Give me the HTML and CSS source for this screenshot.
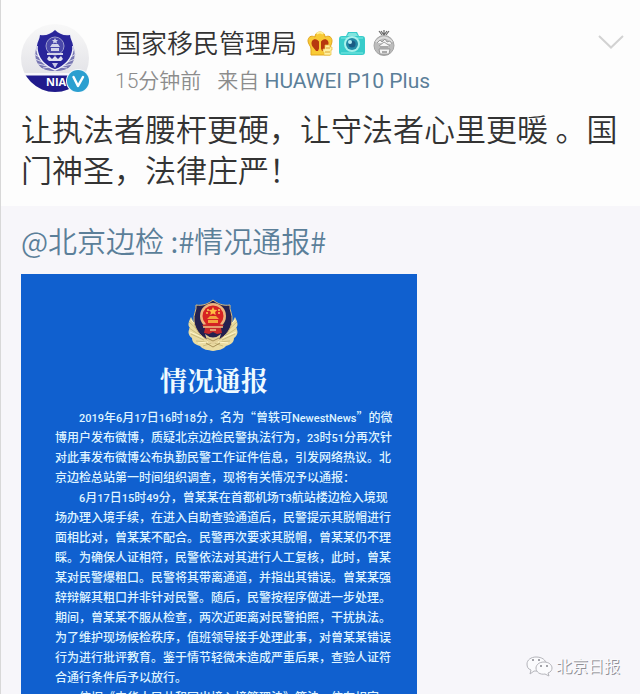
FILE: index.html
```html
<!DOCTYPE html>
<html lang="zh-CN">
<head>
<meta charset="utf-8">
<title>国家移民管理局</title>
<link rel="stylesheet" href="styles.css">
</head>
<body>
<main class="post">
  <header class="head">
    <div class="avatar">
      <svg viewBox="0 0 68 68" role="img" aria-label="NIA">
        <defs>
          <clipPath id="round"><circle cx="34" cy="34" r="34"/></clipPath>
          <linearGradient id="silver" x1="0" y1="0" x2="0" y2="1"><stop offset="0" stop-color="#f8f8f8"/><stop offset="1" stop-color="#dcdce2"/></linearGradient>
        </defs>
        <g clip-path="url(#round)">
          <rect width="68" height="68" fill="url(#silver)"/>
          <path d="M0 51h68v17H0z" fill="#201a8c"/>
          <path d="M0 49h68v2.500H0z" fill="#f7f7fb"/>
        </g>
        <g fill="#7776b2">
          <path d="M17 19c-3 6-4 15 0 21 4 6 10 7 17 7s13-1 17-7c4-6 3-15 0-21l-5 18-12 9-12-9z"/>
        </g>
        <g fill="none" stroke="#d9d9ec" stroke-width="1">
          <path d="M14 25l7 5M13 30l9 5M14 35l10 4M17 40l9 2M22 44l7-1M54 25l-7 5M55 30l-9 5M54 35l-10 4M51 40l-9 2M46 44l-7-1"/>
        </g>
        <path d="M34 6c4 4 9 6 15 5 0 5 4 8 3 14-1 10-8 17-18 21-10-4-17-11-18-21-1-6 3-9 3-14 6 1 11-1 15-5z" fill="#29259a" stroke="#eeeef7" stroke-width="1.500"/>
        <path d="M34 6c4 4 9 6 15 5 0 4 3 7 3 11H16c0-4 3-7 3-11 6 1 11-1 15-5z" fill="#29259a"/>
        <circle cx="34" cy="22" r="9" fill="#4a48aa" stroke="#9d9dce"/>
        <path d="M34 14l1 2h2l-1.500 1.500.5 2-2-1-2 1 .5-2L31 16h2zM29 23l2-3h6l2 3zM30 24h8v3h-8zM26 29h16v2H26z" fill="#d4d4ea"/>
        <path d="M26 35l2-3 3 3 3-3 3 3 3-3 2 3-2 2H28z" fill="#e1e1f0"/>
        <path d="M31 39h6l-3 5z" fill="#c9c9e6"/>
        <text x="25" y="62" class="nia">NIA</text>
        <circle cx="57" cy="57" r="12" fill="#f3fafd"/>
        <circle cx="57" cy="57" r="11" fill="#2b9fd0"/>
        <path d="M52.500 53l4.500 9 5-9" fill="none" stroke="#fff" stroke-width="2.500" stroke-linecap="round" stroke-linejoin="round"/>
      </svg>
    </div>
    <div class="who">
      <div class="name-row">
        <h1 class="name">国家移民管理局</h1>
        <svg class="badge" viewBox="0 0 26 28" aria-hidden="true">
          <path d="M8 7c0-3 2-5 5-5s5 2 5 5c4-2 7 0 7 4 0 3-2 5-2 8v6H4v-6c0-3-3-5-3-8 0-4 3-6 7-4z" fill="#f8ca35" stroke="#e3a51c"/>
          <path d="M10 4c1-2 5-2 6 0" fill="none" stroke="#fff19b" stroke-width="2"/>
          <path d="M5 11c2-3 6-2 8 2 2-4 6-5 8-2 2 4-2 7-4 10h-2l-2-5-2 5H9c-2-3-6-6-4-10z" fill="#b7380e"/>
          <path d="M13 8v14M6 23h14" stroke="#f8ca35" stroke-width="2"/>
          <path d="M18 15h5v2h2v3h-1v5h-7v-3h-1v-3h2z" fill="#fff1a3" stroke="#e9bd3d" stroke-width=".7"/>
          <path d="M19 18h4M18 22h5" stroke="#dca32d"/>
        </svg>
        <svg class="badge" viewBox="0 0 26 28" aria-hidden="true">
          <path d="M7 6l2-4h9l2 4h3q3 0 3 3v13q0 3-3 3H3q-3 0-3-3V9q0-3 3-3z" fill="#38ccca"/>
          <path d="M8 6l2-3h7l2 3z" fill="#82e5df"/>
          <path d="M2 8h22M2 23h22" stroke="#7deae4"/>
          <circle cx="13" cy="14" r="8" fill="#a8f2ec"/>
          <circle cx="13" cy="14" r="6" fill="#238ba8"/>
          <circle cx="13" cy="14" r="3.500" fill="#1a5c84"/>
          <circle cx="11" cy="12" r="2" fill="#b1edf3"/>
        </svg>
        <svg class="badge" viewBox="0 0 26 28" aria-hidden="true">
          <path d="M8 1l3 4M13 0v5M18 1l-3 4M10 1l3 4 3-4" fill="none" stroke="#686868" stroke-width="1.200"/>
          <circle cx="13" cy="15.500" r="10" fill="#bcbcbc" stroke="#a4a4a4"/>
          <path d="M5 12q8-9 16 0" fill="none" stroke="#dedede" stroke-width="2"/>
          <path d="M6 13l3-3 2 2 3-3 2 3 3-1 2 3M8 16l5-4 6 4M9 17h8M8 19h11l-1 5H9z" fill="#f5f5f5" stroke="#8a8a8a" stroke-width=".8"/>
          <path d="M11 21h5v2h-5z" fill="#aaa"/>
        </svg>
      </div>
      <p class="meta"><span>15分钟前</span><span>来自 <a href="#device">HUAWEI P10 Plus</a></span></p>
    </div>
    <button class="more" type="button" aria-label="更多">
      <svg viewBox="0 0 26 16" aria-hidden="true"><path d="M1 2l12 11.500L25 2" fill="none" stroke="#d2d2d2" stroke-width="2"/></svg>
    </button>
  </header>
  <p class="message">让执法者腰杆更硬，让守法者心里更暖 。国门神圣，法律庄严！</p>
  <section class="quote">
    <p class="source"><a href="#user">@北京边检</a> :<a href="#topic">#情况通报#</a></p>
    <article class="notice">
      <svg class="emblem" viewBox="0 0 54 54" role="img" aria-label="警徽">
        <path d="M5 18c-2 4-4 8-1 11-3 4-1 8 2 10 0 5 4 7 8 8 3 4 8 4 13 5 5-1 10-1 13-5 4-1 8-3 8-8 3-2 5-6 2-10 3-3 1-7-1-11L40 36H14z" fill="#eadca2"/>
        <path d="M3 23l11 10M3 29l12 8M5 35l13 6M10 42l11 1M17 47l9-3M51 23L40 33M51 29l-12 8M49 35l-13 6M44 42l-11 1M37 47l-9-3" stroke="#cbbd80" fill="none"/>
        <path d="M5 21l9 9M4 33l14 6M12 44l10-1M49 21l-9 9M50 33l-14 6M42 44l-10-1" stroke="#fff5c9" fill="none"/>
        <path d="M27 1c5 4 10 6 17 5-1 5 3 9 2 16-1 10-8 17-19 22C16 39 9 32 8 22 7 15 11 11 10 6c7 1 12-1 17-5z" fill="#24204f" stroke="#d9bb7b"/>
        <circle cx="27" cy="17" r="13" fill="#eeb47c"/>
        <circle cx="27" cy="17" r="10.500" fill="#d62223"/>
        <path d="M27 8l1.300 2.700 3 .3-2.200 2 .6 3-2.700-1.500-2.700 1.500.6-3-2.200-2 3-.3z" fill="#ffbd42"/>
        <path d="M20 14h2M21 11h2M32 11h2M32 14h2" stroke="#ffcc54" stroke-width="1.500"/>
        <path d="M21 20l3-3h6l3 3zM22 21h10v3H22z" fill="#f3a43c"/>
        <path d="M16 26l5-1 6 2 6-2 5 1-3 3 1 5-5 1-4-2-4 2-5-1 1-5z" fill="#c5292a"/>
        <path d="M17 28h20M24 31h6" stroke="#f0c285" stroke-width="1.500"/>
        <path d="M19 35q8 7 16 0l-2 6-6 5-6-5z" fill="#e4d19a"/>
        <path d="M21 39l6 3 6-3M20 44l7 4 7-4" stroke="#a99259" fill="none"/>
      </svg>
      <h2 class="title">情况通报</h2>
      <div class="report">
        <p><b>2019</b>年<b>6</b>月<b>17</b>日<b>16</b>时<b>18</b>分，名为“曾轶可<b>NewestNews</b>”的微<br>博用户发布微博，质疑北京边检民警执法行为，<b>23</b>时<b>51</b>分再次针<br>对此事发布微博公布执勤民警工作证件信息，引发网络热议。北<br>京边检总站第一时间组织调查，现将有关情况予以通报：</p>
        <p><b>6</b>月<b>17</b>日<b>15</b>时<b>49</b>分，曾某某在首都机场<b>T3</b>航站楼边检入境现<br>场办理入境手续，在进入自助查验通道后，民警提示其脱帽进行<br>面相比对，曾某某不配合。民警再次要求其脱帽，曾某某仍不理<br>睬。为确保人证相符，民警依法对其进行人工复核，此时，曾某<br>某对民警爆粗口。民警将其带离通道，并指出其错误。曾某某强<br>辞辩解其粗口并非针对民警。随后，民警按程序做进一步处理。<br>期间，曾某某不服从检查，两次近距离对民警拍照，干扰执法。<br>为了维护现场候检秩序，值班领导接手处理此事，对曾某某错误<br>行为进行批评教育。鉴于情节轻微未造成严重后果，查验人证符<br>合通行条件后予以放行。</p>
        <p>依据《中华人民共和国出境入境管理法》等法，依有规定，</p>
      </div>
    </article>
  </section>
  <div class="watermark">
    <svg viewBox="0 0 28 22" aria-hidden="true">
      <g fill="#fbfbfd" stroke="#b4b4ba" stroke-width="1">
        <path d="M10 1c-5 0-9 3-9 7 0 3 1 5 4 6l-1 4 4-3h4c5 0 8-3 8-7s-4-7-10-7z"/>
        <path d="M18 6c-5 0-8 3-8 6 0 4 4 7 9 6l4 2-1-3c3-1 4-3 4-5 0-3-3-6-8-6z"/>
      </g>
      <path d="M6 4h2M12 4h2M14 10h2M20 10h2" stroke="#88888e" stroke-width="1.500"/>
    </svg>
    <span>北京日报</span>
  </div>
</main>
</body>
</html>
```
FILE: styles.css
```css
* { box-sizing: border-box; }

body {
  margin: 0;
  background: #fdfdfd;
  color: #333;
  font-family: Roboto, "Noto Sans CJK SC", sans-serif;
}

h1, h2, p { margin: 0; font-weight: 350; }
a { color: #5b7f99; text-decoration: none; }
svg { display: block; }

.post {
  position: relative;
  display: flex;
  flex-direction: column;
  height: 100vh;
  overflow: hidden;
  border-left: 1px solid #d8d8d8;
}

.head {
  display: flex;
  align-items: flex-start;
  padding: 24px 16px 0 20px;
}

.avatar { width: 68px; margin-right: 26px; }
.nia { font: bold 11px "Open Sans", sans-serif; fill: #fff; }
.who { flex: 1; }
.name-row { display: flex; align-items: center; height: 40px; }
.name { margin-right: 10px; font-size: 26px; line-height: 40px; }
.badge { width: 26px; height: 28px; margin-right: 6px; }
.meta {
  display: flex;
  gap: 16px;
  color: #8c8c8c;
  font-size: 21px;
  line-height: 34px;
}
.meta a { font-weight: 400; }

.more {
  margin-top: 10px;
  padding: 0;
  border: 0;
  background: none;
}
.more svg { width: 26px; height: 16px; }

.message {
  padding: 12px 20px 14px;
  font-size: 31px;
  line-height: 41px;
}

.quote {
  flex: 1;
  min-height: 0;
  padding: 12px 20px 0;
  background: #f7f6fa;
}
.source {
  margin-bottom: 12px;
  color: #5b7f99;
  font-family: "Noto Sans CJK SC", sans-serif;
  font-size: 29px;
  line-height: 44px;
}

.notice {
  width: 66%;
  min-width: 396px;
  padding: 25px 0 24px 34px;
  background: #1060cf;
  color: #dff4ff;
  font-family: "Noto Sans CJK SC", sans-serif;
}
.emblem { width: 54px; height: 54px; margin-left: 131px; }
.title {
  margin-left: 105px;
  color: #effaff;
  font-family: "Noto Serif CJK SC", "Noto Sans CJK SC", serif;
  font-size: 27px;
  font-weight: 700;
  line-height: 54px;
}
.report { font-size: 12px; line-height: 20px; white-space: nowrap; }
.report p { font-weight: 500; text-indent: 24px; }
.report b { font: 500 11px Roboto, sans-serif; }

.watermark {
  position: absolute;
  right: 20px;
  bottom: 16px;
  display: flex;
  align-items: center;
  gap: 2px;
  color: #fafafc;
  font-size: 16px;
  line-height: 22px;
  text-shadow: 1px 1px 0 #909096;
}
.watermark svg { width: 28px; height: 22px; }
```
